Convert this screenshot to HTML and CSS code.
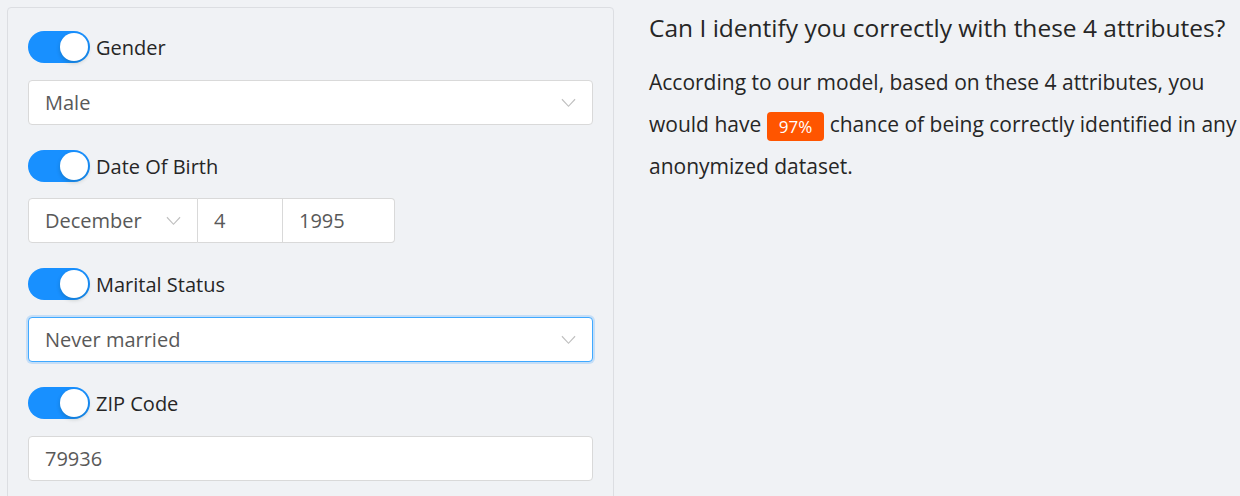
FILE: index.html
```html
<!DOCTYPE html>
<html>
<head>
<meta charset="utf-8">
<link rel="stylesheet" href="styles.css">
</head>
<body>
<div class="page">
  <div class="card">
    <div class="section">
      <div class="toggle-row"><span class="switch"><span class="knob"></span></span><span class="label">Gender</span></div>
      <div class="field select"><span class="value">Male</span><svg class="chev" viewBox="0 0 16 10"><path d="M1 1 L8 8.5 L15 1" fill="none" stroke="#bfbfbf" stroke-width="1.2"/></svg></div>
    </div>
    <div class="section">
      <div class="toggle-row"><span class="switch"><span class="knob"></span></span><span class="label">Date Of Birth</span></div>
      <div class="date-group">
        <div class="field month"><span class="value">December</span><svg class="chev" viewBox="0 0 16 10"><path d="M1 1 L8 8.5 L15 1" fill="none" stroke="#bfbfbf" stroke-width="1.2"/></svg></div>
        <div class="field day"><span class="value">4</span></div>
        <div class="field year"><span class="value">1995</span></div>
      </div>
    </div>
    <div class="section">
      <div class="toggle-row"><span class="switch"><span class="knob"></span></span><span class="label">Marital Status</span></div>
      <div class="field select focused"><span class="value">Never married</span><svg class="chev" viewBox="0 0 16 10"><path d="M1 1 L8 8.5 L15 1" fill="none" stroke="#bfbfbf" stroke-width="1.2"/></svg></div>
    </div>
    <div class="section">
      <div class="toggle-row"><span class="switch"><span class="knob"></span></span><span class="label">ZIP Code</span></div>
      <div class="field"><span class="value">79936</span></div>
    </div>
  </div>
  <div class="result">
    <h2 class="title">Can I identify you correctly with these 4 attributes?</h2>
    <p class="text">According to our model, based on these 4 attributes, you would have <span class="badge">97%</span> chance of being correctly identified in any anonymized dataset.</p>
  </div>
</div>
</body>
</html>
```

FILE: styles.css
```css
html, body {
  margin: 0;
  padding: 0;
  background: #f0f2f5;
  font-family: "Open Sans", "Noto Sans", sans-serif;
  color: #262626;
  overflow: hidden;
}
.page {
  display: flex;
  align-items: flex-start;
  padding: 7px 0 0 7px;
  gap: 35px;
  height: 496px;
  box-sizing: border-box;
}
.card {
  width: 607px;
  box-sizing: border-box;
  border: 1px solid #dcdee2;
  border-radius: 4px;
  padding: 23px 20px 40px 20px;
  flex-shrink: 0;
}
.section {
  margin-bottom: 25px;
}
.toggle-row {
  display: flex;
  align-items: center;
  height: 32px;
  gap: 6px;
}
.switch {
  width: 62px;
  height: 32px;
  border-radius: 16px;
  background: #1890ff;
  position: relative;
  flex-shrink: 0;
}
.knob {
  position: absolute;
  right: 2px;
  top: 2px;
  width: 28px;
  height: 28px;
  border-radius: 50%;
  background: #fff;
  box-shadow: 0 2px 4px rgba(0, 35, 11, 0.2);
}
.label {
  font-size: 20px;
  color: #262626;
}
.field {
  margin-top: 17px;
  height: 45px;
  box-sizing: border-box;
  border: 1px solid #d9d9d9;
  border-radius: 4px;
  background: #fff;
  display: flex;
  align-items: center;
  padding: 0 16px;
  font-size: 20px;
  color: #595959;
}
.field .value {
  flex: 1;
}
.chev {
  width: 15px;
  height: 10px;
}
.focused {
  border-color: #40a9ff;
  box-shadow: 0 0 0 2px rgba(24, 144, 255, 0.2);
}
.date-group {
  display: flex;
  margin-top: 16px;
}
.date-group .field {
  margin-top: 0;
  height: 45px;
}
.month {
  width: 170px;
  border-radius: 4px 0 0 4px;
  padding-right: 16px;
}
.day {
  width: 85px;
  border-left: none;
  border-radius: 0;
}
.year {
  width: 112px;
  border-left: none;
  border-radius: 0 4px 4px 0;
}
.result {
  width: 600px;
  flex-shrink: 0;
}
.title {
  margin: 6px 0 0 0;
  font-size: 24.5px;
  font-weight: 400;
  line-height: 30px;
  color: #262626;
}
.text {
  margin: 18px 0 0 0;
  font-size: 21px;
  line-height: 42px;
  color: #262626;
}
.badge {
  display: inline-block;
  background: #ff5500;
  color: #fff;
  font-size: 17px;
  line-height: 29px;
  height: 29px;
  padding: 0 12px;
  border-radius: 4px;
  vertical-align: middle;
}
```
